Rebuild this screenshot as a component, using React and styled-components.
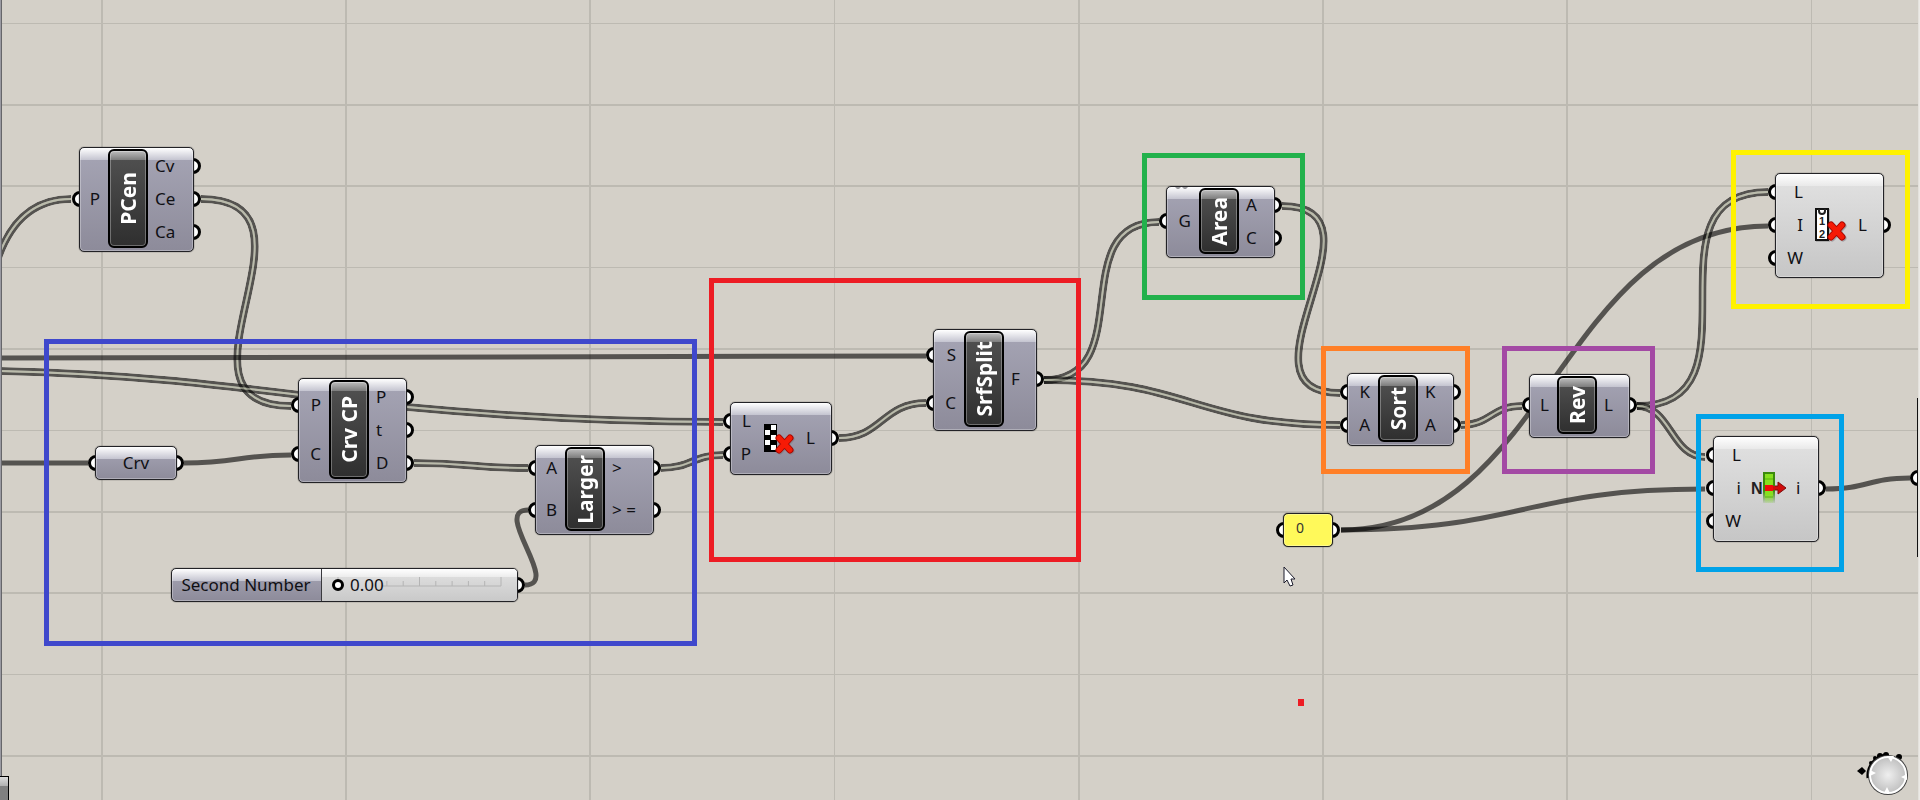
import React from "react";
import styled, { createGlobalStyle } from "styled-components";

const columns = [[102, 2], [346, 2], [590, 2], [834, 1], [1079, 2], [1323, 2], [1567, 2], [1811, 1]];
const rows = [[23, 1], [105, 2], [186, 2], [267, 1], [349, 2], [430, 1], [512, 2], [593, 2], [674, 1], [756, 2]];

const wires = [
  { d: "M-2 258C12 218 36 199 71 199", double: true },
  { d: "M201 199C337 199 155 406 291 406", double: true },
  { d: "M0 358C300 358 450 356 926 356" },
  { d: "M0 371C180 375 290 396 407 407S620 422 723 422", double: true },
  { d: "M0 463H88" },
  { d: "M184 463C238 463 238 455 291 455" },
  { d: "M414 463C471 463 471 468 528 468", double: true },
  { d: "M525 585C562 585 491 510 528 510" },
  { d: "M661 468C692 468 692 455 723 455", double: true },
  { d: "M839 438C882 438 882 403 926 403", double: true },
  { d: "M1044 380C1140 380 1063 222 1159 222", double: true },
  { d: "M1044 380C1192 380 1192 425 1340 425", double: true },
  { d: "M1282 206C1397 206 1225 393 1340 393", double: true },
  { d: "M1461 425C1491 425 1491 406 1522 406", double: true },
  { d: "M1341 530C1551 530 1558 226 1768 226" },
  { d: "M1341 530C1523 530 1523 489 1705 489" },
  { d: "M1637 406C1768 406 1637 192 1768 192", double: true },
  { d: "M1637 406C1671 406 1671 457 1705 457", double: true },
  { d: "M1826 489C1868 489 1868 478 1910 478" },
];

const nodes = [
  { title: "PCen", x: 79, y: 147, w: 115, h: 105, lead: 29, inputs: ["P"], outputs: ["Cv", "Ce", "Ca"] },
  { title: "Crv CP", x: 298, y: 378, w: 109, h: 105, lead: 31, inputs: ["P", "C"], outputs: ["P", "t", "D"] },
  { title: "Larger", x: 535, y: 445, w: 119, h: 90, lead: 30, inputs: ["A", "B"], outputs: [">", "> ="] },
  { icon: "pattern", x: 730, y: 402, w: 102, h: 73, lead: 29, inputs: ["L", "P"], outputs: ["L"] },
  { title: "SrfSplit", x: 933, y: 329, w: 104, h: 102, lead: 31, inputs: ["S", "C"], outputs: ["F"] },
  { title: "Area", x: 1166, y: 186, w: 109, h: 72, lead: 33, inputs: ["G"], outputs: ["A", "C"] },
  { title: "Sort", x: 1347, y: 373, w: 107, h: 73, lead: 31, inputs: ["K", "A"], outputs: ["K", "A"] },
  { title: "Rev", x: 1529, y: 374, w: 101, h: 64, lead: 28, inputs: ["L"], outputs: ["L"] },
  { icon: "index", light: true, x: 1775, y: 173, w: 109, h: 105, lead: 36, inputs: ["L", "I", "W"], outputs: ["L"] },
  { icon: "item", light: true, x: 1713, y: 436, w: 106, h: 106, lead: 36, inputs: ["L", "i", "W"], outputs: ["i"] },
];

const frames = [
  { x: 44, y: 339, w: 653, h: 307, color: "#3f48cc" },
  { x: 709, y: 278, w: 372, h: 284, color: "#ed1c24" },
  { x: 1142, y: 153, w: 163, h: 147, color: "#22b14c" },
  { x: 1321, y: 346, w: 149, h: 128, color: "#ff7f27" },
  { x: 1502, y: 346, w: 153, h: 128, color: "#a349a4" },
  { x: 1731, y: 150, w: 179, h: 159, color: "#fff200" },
  { x: 1696, y: 414, w: 148, h: 158, color: "#00a2e8" },
];

function Backdrop() {
  return (
    <Layer aria-hidden="true">
      <g fill="#bdbab2">
        {columns.map(([x, size]) => (
          <rect key={x} x={x - size + 1} width={size} height="100%" />
        ))}
        {rows.map(([y, size]) => (
          <rect key={y} y={y - size + 1} width="100%" height={size} />
        ))}
      </g>
      {wires.map(({ d, double }, i) =>
        double ? (
          <g key={d} fill="none">
            <mask id={`wire${i}`} maskUnits="userSpaceOnUse" x="-10" y="0" width="1940" height="800">
              <path d={d} stroke="#fff" strokeWidth="8" />
              <path d={d} stroke="#000" strokeWidth="1.8" />
            </mask>
            <path d={d} stroke="#000" strokeOpacity="0.6" strokeWidth="8" mask={`url(#wire${i})`} />
            <path d={d} stroke="#a9ae98" strokeOpacity="0.6" strokeWidth="2" />
          </g>
        ) : (
          <path key={d} d={d} fill="none" stroke="#000" strokeOpacity="0.6" strokeWidth="5" />
        )
      )}
    </Layer>
  );
}

function Cross() {
  return (
    <g strokeLinecap="round">
      <path d="M16 17L27 29M27 17L16 29" stroke="#77777e" strokeOpacity="0.5" strokeWidth="7" transform="translate(1 1)" />
      <path d="M16 17L27 29M27 17L16 29" stroke="#a80800" strokeWidth="7" />
      <path d="M16 17L27 29M27 17L16 29" stroke="#f61a05" strokeWidth="5" />
    </g>
  );
}

function NodeIcon({ name }) {
  if (name === "pattern") {
    const cells = [0, 1, 2, 3, 4].map((r) => (
      <rect key={r} x={r % 2 ? 2 : 8} y={4 + r * 5} width="5" height="5" fill="#fff" />
    ));
    return (
      <svg width="34" height="34" viewBox="0 0 34 34" fill="none">
        <rect x="1" y="3" width="13" height="28" fill="#000" />
        {cells}
        <Cross />
      </svg>
    );
  }
  if (name === "index") {
    return (
      <svg width="34" height="34" viewBox="0 0 34 34" fill="none">
        <rect x="1" y="1" width="14" height="33" fill="#777" fillOpacity="0.4" />
        <rect x="1" y="1" width="12" height="31" fill="#fff" stroke="#111" strokeWidth="2" />
        <path d="M4 1V3Q4 6 7 6T10 3V1" stroke="#222" strokeWidth="2" />
        <IconText x="4" y="17" $size={11}>1</IconText>
        <IconText x="4" y="30" $size={11}>2</IconText>
        <Cross />
      </svg>
    );
  }
  return (
    <svg width="36" height="34" viewBox="0 0 36 34" fill="none">
      <defs>
        <linearGradient id="strip" x2="0" y2="1">
          <stop offset="0.6" stopColor="#3b8a0c" />
          <stop offset="1" stopColor="#3b8a0c" stopOpacity="0.1" />
        </linearGradient>
        <linearGradient id="stripFill" x2="0" y2="1">
          <stop offset="0.7" stopColor="#86e01e" />
          <stop offset="1" stopColor="#b5e878" stopOpacity="0.2" />
        </linearGradient>
      </defs>
      <IconText x="0" y="23" $size={16}>N</IconText>
      <rect x="12" y="1" width="12" height="31" fill="url(#strip)" />
      <rect x="14" y="3" width="8" height="29" fill="url(#stripFill)" />
      <path d="M14 8H22M14 26H22" stroke="#58b410" />
      <path d="M14 15H27V11L35 17L27 23V19H14Z" fill="#d00b0b" />
      <path d="M24 15H27V11L35 17L27 23V19H24" stroke="#7c0d0d" />
      <rect x="14" y="14" width="8" height="6" fill="#f00a0a" />
    </svg>
  );
}

function Node({ node }) {
  const { title, icon, light, x, y, w, h, lead, inputs, outputs } = node;
  return (
    <Place $x={x} $y={y}>
      <Body $w={w} $h={h} $lead={lead} $light={light}>
        <Column>
          {inputs.map((name) => (
            <Port key={name} $side="left">{name}</Port>
          ))}
        </Column>
        {title ? <Title><span>{title}</span></Title> : <IconBox><NodeIcon name={icon} /></IconBox>}
        <Column>
          {outputs.map((name) => (
            <Port key={name} $side="right">{name}</Port>
          ))}
        </Column>
      </Body>
    </Place>
  );
}

function NumberSlider() {
  const [value, setValue] = React.useState(0);
  const ticks = Array.from({ length: 11 }, (_, i) => i);
  return (
    <Place $x={171} $y={568}>
      <SliderBody>
        <SliderLabel htmlFor="second-number">Second Number</SliderLabel>
        <Track>
          <svg width="176" height="20" viewBox="0 0 176 20" aria-hidden="true">
            <path d="M50 11H169" stroke="#b4b4b4" />
            {ticks.filter((i) => i === 0 || i > 2).map((i) => (
              <path key={i} d={`M${6 + i * 16.3} 11v${i % 5 ? -5 : -9}`} stroke="#b4b4b4" />
            ))}
          </svg>
          <Range
            id="second-number"
            type="range"
            min="0"
            max="1"
            step="0.01"
            value={value}
            onChange={(e) => setValue(Number(e.target.value))}
          />
          <Value htmlFor="second-number">{value.toFixed(2)}</Value>
        </Track>
      </SliderBody>
    </Place>
  );
}

function Compass() {
  return (
    <svg width="54" height="44" viewBox="0 0 54 44">
      <defs>
        <radialGradient id="ball">
          <stop offset="0" stopColor="#efefef" />
          <stop offset="1" stopColor="#c0c0c0" />
        </radialGradient>
      </defs>
      <path d="M1 19L6 15L10 19L6 23Z" />
      <path d="M12 26A21 21 0 0 1 30 3" fill="none" stroke="#000" strokeWidth="3" />
      <circle cx="15" cy="11" r="2" />
      <circle cx="19" cy="6" r="2" />
      <circle cx="24" cy="4" r="3" />
      <circle cx="30" cy="3" r="3" />
      <circle cx="43" cy="5" r="3" />
      <circle cx="32" cy="23" r="20" fill="#444" />
      <circle cx="32" cy="23" r="18" fill="url(#ball)" stroke="#fff" strokeWidth="2" />
      <path d="M31 4H38L35 10ZM28 41L31 35L34 41ZM14 18L20 21L14 24ZM51 22L45 25L51 28Z" fill="#fff" />
    </svg>
  );
}

export default function App() {
  return (
    <Canvas>
      <GlobalStyle />
      <Backdrop />
      <Edge $side="left" />
      <Place $x={0} $y={776}><CutNode /></Place>
      {nodes.map((node) => (
        <Node key={`${node.x}-${node.y}`} node={node} />
      ))}
      <Place $x={95} $y={446}>
        <Param>
          <Port $side="left" />
          <span>Crv</span>
          <Port $side="right" />
        </Param>
      </Place>
      <NumberSlider />
      <Place $x={1283} $y={513}>
        <Panel>
          <Port $side="left" />
          <PanelInput aria-label="Panel" defaultValue="0" />
          <Port $side="right" />
        </Panel>
      </Place>
      <Place $x={1917} $y={398}>
        <Sliver><Port $side="left" /></Sliver>
      </Place>
      <Place $x={1175} $y={187}>
        <svg width="14" height="4" viewBox="0 0 14 4" fill="#9a9a9e">
          <path d="M0 0H6L4 2H2ZM7 0H13L11 2H9Z" />
        </svg>
      </Place>
      {frames.map((f) => (
        <Place key={f.color} $x={f.x} $y={f.y}>
          <Frame $w={f.w} $h={f.h} $color={f.color} />
        </Place>
      ))}
      <Place $x={1298} $y={699}><Dot /></Place>
      <Place $x={1283} $y={566}>
        <svg width="14" height="22" viewBox="0 0 14 22">
          <path d="M1 1V17L4 14L7 20L10 19L8 13H12Z" fill="#fff" stroke="#1c1c2c" />
        </svg>
      </Place>
      <Place $x={1856} $y={752}><Compass /></Place>
      <Edge $side="right" />
    </Canvas>
  );
}

const GlobalStyle = createGlobalStyle`
  body {
    margin: 0;
    font-family: "Noto Sans", "Open Sans", sans-serif;
    font-size: 17px;
    line-height: 24px;
    color: #101014;
  }
  *, *::before, *::after {
    box-sizing: border-box;
  }
`;

const Canvas = styled.main`
  position: relative;
  isolation: isolate;
  min-height: 100vh;
  overflow: hidden;
  background: #d4d0c8;
`;

const Layer = styled.svg`
  position: absolute;
  inset: 0;
  width: 100%;
  height: 100%;
`;

const Place = styled.div`
  position: absolute;
  left: ${({ $x }) => $x}px;
  top: ${({ $y }) => $y}px;
  isolation: isolate;

  svg {
    display: block;
  }
`;

const metal = `
  linear-gradient(#ffffff, #c4c4d0) 0 0 / 100% 12px no-repeat,
  linear-gradient(#a6a5b5, #8d8b9a)
`;
const silver = `
  linear-gradient(#ffffff, #e9e9e9) 0 0 / 100% 12px no-repeat,
  linear-gradient(#e2e2e2, #c6c6c6)
`;

const Shell = styled.div`
  position: relative;
  border-radius: 5px;

  /* the fill sits on its own layer so the grips can tuck in behind it */
  &::before {
    content: "";
    position: absolute;
    inset: 0;
    z-index: -1;
    border: 1px solid #222226;
    border-radius: 5px;
    background: ${({ $light }) => ($light ? silver : metal)};
    box-shadow: 0 0 1px #000, inset 0 0 0 1px rgba(255, 255, 255, 0.3);
  }
`;

const Body = styled(Shell)`
  display: grid;
  grid-template-columns: ${({ $lead }) => $lead}px 40px 1fr;
  width: ${({ $w }) => $w}px;
  height: ${({ $h }) => $h}px;
  padding: 2px 0 4px;
`;

const Column = styled.div`
  display: flex;
  flex-direction: column;
`;

const Port = styled.div`
  position: relative;
  flex: 1;
  display: flex;
  align-items: center;
  justify-content: ${({ $side }) => ($side === "left" ? "flex-end" : "flex-start")};
  padding: ${({ $side }) => ($side === "left" ? "0 8px 0 0" : "0 0 0 7px")};

  &::before {
    content: "";
    position: absolute;
    z-index: -2;
    ${({ $side }) => $side}: -7px;
    top: 50%;
    width: 16px;
    height: 16px;
    margin-top: -8px;
    border: 3px solid #000;
    border-radius: 50%;
    background: #fff;
  }
`;

const Title = styled.div`
  display: flex;
  align-items: center;
  justify-content: center;
  border: 2px solid #000;
  border-radius: 6px;
  background:
    linear-gradient(#bdbdbd, #7c7c7c) 0 0 / 100% 9px no-repeat,
    linear-gradient(#525252, #2f2f2f);
  box-shadow: inset 0 0 0 1px rgba(255, 255, 255, 0.3);
  color: #fff;
  font-size: 21px;
  font-weight: 700;

  span {
    writing-mode: vertical-rl;
    transform: rotate(180deg);
    white-space: nowrap;
  }
`;

const IconBox = styled.div`
  display: flex;
  align-items: center;
  justify-content: flex-end;
  padding-right: 2px;
`;

const IconText = styled.text`
  fill: #222;
  font-family: "Liberation Sans", sans-serif;
  font-size: ${({ $size }) => $size}px;
  font-weight: 700;
`;

const Param = styled(Shell)`
  display: grid;
  grid-template-columns: 1fr auto 1fr;
  align-items: center;
  width: 82px;
  height: 34px;
  padding-bottom: 1px;
`;

const SliderBody = styled(Shell)`
  display: flex;
  width: 347px;
  height: 34px;

  &::after {
    content: "";
    position: absolute;
    z-index: -2;
    right: -7px;
    top: 9px;
    width: 16px;
    height: 16px;
    border: 3px solid #000;
    border-radius: 50%;
    background: #fff;
  }
`;

const SliderLabel = styled.label`
  display: flex;
  align-items: center;
  justify-content: center;
  width: 150px;
  padding-bottom: 1px;
`;

const Track = styled.div`
  flex: 1;
  display: grid;
  grid-template-columns: 18px 1fr;
  align-items: center;
  margin: 1px;
  padding: 0 0 1px 10px;
  border-radius: 0 4px 4px 0;
  background:
    linear-gradient(#ffffff, #ececec) 0 0 / 100% 8px no-repeat,
    linear-gradient(#e2e2e2, #c9c9c9);
  box-shadow: -1px 0 #3a3a3e;

  svg, input {
    grid-area: 1 / 1 / 2 / 3;
  }
`;

const Range = styled.input`
  appearance: none;
  width: 176px;
  height: 12px;
  margin: 0;
  background: transparent;

  &::-webkit-slider-thumb {
    appearance: none;
    width: 12px;
    height: 12px;
    border: 3px solid #000;
    border-radius: 50%;
    background: #fff;
  }
`;

const Value = styled.output`
  grid-area: 1 / 2 / 2 / 3;
  pointer-events: none;
`;

const Panel = styled(Shell)`
  display: grid;
  grid-template-columns: 1px 1fr 1px;
  width: 50px;
  height: 34px;

  &::before {
    background: #fff95a;
  }

  ${Port} {
    padding: 0;
  }
`;

const PanelInput = styled.input`
  width: 100%;
  height: 28px;
  padding: 0 0 0 12px;
  border: 0;
  background: transparent;
  color: #333;
  font-family: inherit;
  font-size: 14px;
`;

const Sliver = styled.div`
  display: flex;
  width: 3px;
  height: 159px;
  background: #111;

  ${Port} {
    padding: 0;
  }
`;

const Frame = styled.div`
  width: ${({ $w }) => $w}px;
  height: ${({ $h }) => $h}px;
  border: 5px solid ${({ $color }) => $color};
`;

const Dot = styled.div`
  width: 6px;
  height: 7px;
  background: #ed1c24;
`;

const Edge = styled.div`
  position: absolute;
  top: 0;
  bottom: 0;
  ${({ $side }) => $side}: 0;
  width: 2px;
  border-right: 1px solid ${({ $side }) => ($side === "left" ? "#66666a" : "#eceae6")};
  background: ${({ $side }) => ($side === "left" ? "#9a9aa2" : "#e4e2dd")};
`;

const CutNode = styled.div`
  width: 9px;
  height: 24px;
  border: solid #000;
  border-width: 1px 1px 0 0;
  background: linear-gradient(#dcdcdc, #b0b0b0 9px, #808080 9px);
`;
